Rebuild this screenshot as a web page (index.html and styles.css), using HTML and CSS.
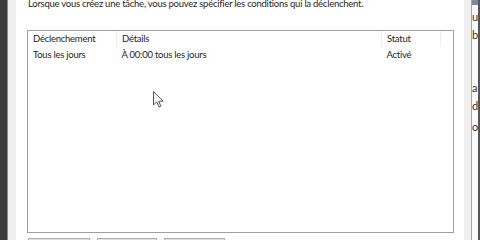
FILE: index.html
```html
<!DOCTYPE html>
<html lang="fr">
<head>
  <meta charset="UTF-8">
  <title>Déclencheurs</title>
  <link rel="stylesheet" href="styles.css">
</head>
<body>
  <div class="screen">
    <div class="frame-left"></div>
    <div class="frame-gutter"></div>

    <!-- Onglet Déclencheurs -->
    <div class="tab-page">
      <p class="intro">Lorsque vous créez une tâche, vous pouvez spécifier les conditions qui la déclenchent.</p>

      <div class="list-box">
        <table class="trigger-list">
          <thead>
            <tr>
              <th class="col-trigger">Déclenchement</th>
              <th class="col-details">Détails</th>
              <th class="col-status">Statut</th>
              <th class="col-rest"></th>
            </tr>
          </thead>
          <tbody>
            <tr>
              <td>Tous les jours</td>
              <td>À 00:00 tous les jours</td>
              <td>Activé</td>
              <td></td>
            </tr>
          </tbody>
        </table>

        <svg class="cursor" width="12" height="19" viewBox="0 0 12 19">
          <path d="M0.5 0.5 L0.5 14 L3.8 10.8 L6 16 L7.8 15.2 L5.7 10.2 L10 10.2 Z" fill="#fff" stroke="#555" stroke-width="1"/>
        </svg>
      </div>

      <div class="buttons">
        <button class="btn btn-new"></button>
        <button class="btn btn-edit"></button>
        <button class="btn btn-delete"></button>
      </div>
    </div>

    <div class="frame-gutter right"></div>
    <div class="behind">
      <span class="behind-head"></span>
      <span class="behind-line l1">u</span>
      <span class="behind-line l2">b</span>
      <span class="behind-line l3">a</span>
      <span class="behind-line l4">d</span>
      <span class="behind-line l5">o</span>
    </div>
  </div>
</body>
</html>
```

FILE: styles.css
```css
/* Base */
html, body {
  margin: 0;
  padding: 0;
  background: #fff;
}
body {
  font-family: Lato, "Noto Sans", sans-serif;
  font-size: 9.5px;
  letter-spacing: -0.25px;
  color: #1e1e1e;
  overflow: hidden;
}
.screen {
  display: flex;
  width: 480px;
  height: 240px;
  overflow: hidden;
}

/* Window frames */
.frame-left {
  flex: none;
  width: 7px;
  background: #3c3c3c;
  border-right: 1px solid #8c8c8c;
}
.frame-gutter {
  flex: none;
  width: 8px;
  background: #efefef;
}
.frame-gutter.right {
  width: 7px;
  border-right: 1px solid #a8a8a8;
}

/* Tab page */
.tab-page {
  flex: none;
  width: 427px;
  padding: 0 10px 0 11px;
  background: #fff;
}
.intro {
  margin: -3px 0 0 1px;
  line-height: 14px;
  white-space: nowrap;
}

.list-box {
  position: relative;
  margin-top: 19px;
  height: 201px;
  border: 1px solid #a0a0a0;
  background: #fff;
}
.trigger-list {
  border-collapse: collapse;
  width: 100%;
  table-layout: fixed;
}
.trigger-list th,
.trigger-list td {
  padding: 0 0 0 5px;
  height: 16px;
  line-height: 16px;
  text-align: left;
  font-weight: normal;
  white-space: nowrap;
  overflow: hidden;
}
.trigger-list th {
  border-right: 1px solid #ededed;
}
.col-trigger { width: 83px; }
.col-details { width: 259px; }
.col-status { width: 53px; }
.trigger-list th.col-rest { border-right: none; }

.cursor {
  position: absolute;
  left: 125px;
  top: 60px;
}

/* Bottom buttons (only their top edge shows) */
.buttons {
  display: flex;
  gap: 7px;
  margin-top: 5px;
  padding-left: 1px;
}
.btn {
  flex: none;
  height: 20px;
  border: 1px solid #adadad;
  background: #e1e1e1;
  padding: 0;
}
.btn-new { width: 62px; }
.btn-edit { width: 60px; }
.btn-delete { width: 61px; }

/* Window behind, on the right */
.behind {
  flex: 1;
  position: relative;
  overflow: hidden;
  background: #fafafa;
  border-right: 2px solid #555;
}
.behind-head {
  position: absolute;
  left: 0;
  top: 0;
  width: 100%;
  height: 5px;
  background: #7a8ba0;
}
.behind-line {
  position: absolute;
  left: 0;
  font-size: 11px;
  line-height: 12px;
  color: #333;
}
.l1 { top: 11px; }
.l2 { top: 29px; }
.l3 { top: 82px; }
.l4 { top: 100px; }
.l5 { top: 121px; }
```
